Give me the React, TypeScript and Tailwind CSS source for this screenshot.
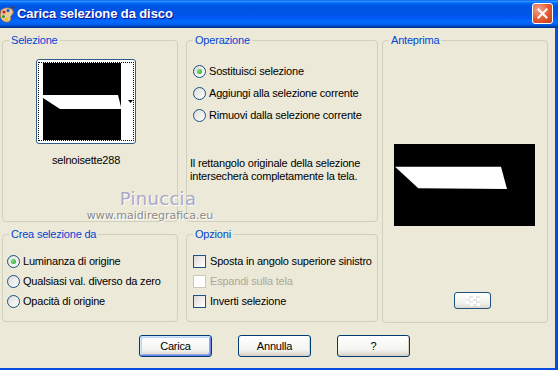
import React from "react";

function Radio({ checked }: { checked?: boolean }) {
  return (
    <span className="w-[13px] h-[13px] rounded-full border border-[#1C5180] bg-[linear-gradient(135deg,#DCDCD7,#FFFFFF)] flex items-center justify-center shrink-0">
      {checked && (
        <span className="w-[5px] h-[5px] rounded-full bg-[radial-gradient(circle_at_35%_35%,#7BE07B,#21A121)]" />
      )}
    </span>
  );
}

function Check({ disabled }: { disabled?: boolean }) {
  return disabled ? (
    <span className="w-[13px] h-[13px] border border-[#CAC8BB] bg-white shrink-0" />
  ) : (
    <span className="w-[13px] h-[13px] border border-[#1C5180] bg-[linear-gradient(135deg,#DCDCD7,#FFFFFF)] shrink-0" />
  );
}

function Group({
  label,
  className,
  children,
}: {
  label: string;
  className: string;
  children?: React.ReactNode;
}) {
  return (
    <div className={"relative border border-[#D0D0BF] rounded-[4px] " + className}>
      <span className="absolute -top-[7px] left-[6px] px-[2px] bg-[#ECE9D8] text-[#0046D5] leading-[13px] whitespace-nowrap">
        {label}
      </span>
      {children}
    </div>
  );
}

function XPButton({ label, def }: { label: string; def?: boolean }) {
  return (
    <div
      className={
        "w-[73px] h-[22px] rounded-[3px] border border-[#003C74] bg-[linear-gradient(to_bottom,#FFFFFF,#F4F4F0_70%,#D6D0C5)] flex items-center justify-center text-black " +
        (def
          ? "shadow-[inset_1px_1px_0_#CEE7FF,inset_-1px_-1px_0_#6982EE,inset_2px_2px_0_#BCD4F6,inset_-2px_-2px_0_#89ADE4]"
          : "shadow-[inset_-1px_-1px_0_#D6D0C5]")
      }
    >
      {label}
    </div>
  );
}

export default function App() {
  return (
    <div className="w-[558px] h-[370px] flex flex-col overflow-hidden font-['Liberation_Sans',Arial,sans-serif] text-[11px] tracking-[-0.2px] text-black">
      {/* Title bar */}
      <div className="h-[28px] shrink-0 flex items-center relative bg-[linear-gradient(to_bottom,#0058EE_0%,#3593FF_4%,#288EFF_6%,#127DFF_8%,#036FFC_10%,#0262EE_14%,#0057E5_20%,#0054E3_24%,#0055EB_56%,#005BF5_66%,#026AFE_76%,#0062EF_86%,#0052D6_92%,#0040AB_94%,#003092_100%)]">
        <svg width="15" height="18" viewBox="0 0 15 18" className="mt-[1px] shrink-0">
          <path d="M1 4 Q6 0 12 3 Q15 6 12 9 Q10 10 11 13 Q10 17 5 16 Q0 14 0 9 Z" fill="#E9C79A" stroke="#8A5A2A" strokeWidth="0.8" />
          <circle cx="4" cy="6" r="1.6" fill="#D42020" />
          <circle cx="8" cy="4.5" r="1.5" fill="#1C55D0" />
          <circle cx="3.5" cy="10.5" r="1.5" fill="#2E9E2E" />
          <circle cx="6.5" cy="13.5" r="1.4" fill="#F0C010" />
          <path d="M12 2 L14.5 0.5" stroke="#5A3A1A" strokeWidth="1.4" />
        </svg>
        <span className="ml-[2px] text-white font-bold text-[13px] tracking-[-0.1px] [text-shadow:1px_1px_0_#0F1089]">
          Carica selezione da disco
        </span>
        <div className="absolute right-[5px] top-[3px] w-[21px] h-[21px] rounded-[3px] border border-white bg-[radial-gradient(circle_at_30%_30%,#F3A58C,#E3582F_55%,#C23A14)] flex items-center justify-center">
          <svg width="11" height="11" viewBox="0 0 11 11">
            <path d="M1.5 1.5 L9.5 9.5 M9.5 1.5 L1.5 9.5" stroke="white" strokeWidth="2" strokeLinecap="square" />
          </svg>
        </div>
      </div>

      {/* Body */}
      <div className="flex-1 relative bg-[#ECE9D8] border-r-[3px] border-b-[2px] border-[#0A4CE0] pt-[12px] pl-[2px] flex flex-col whitespace-nowrap">
        <div className="flex">
          {/* Left column */}
          <div className="w-[176px] flex flex-col gap-[12px]">
            <Group label="Selezione" className="h-[182px] pl-[33px] pt-[18px]">
              <div className="w-[100px]">
                <div className="relative w-[100px] h-[85px] rounded-[3px] border border-[#2F5C8A] bg-white px-[1px] py-[2px]">
                  <div className="w-[96px] h-[79px] border border-dotted border-black flex">
                    <svg width="78" height="77" viewBox="0 0 78 77" className="ml-[4px] shrink-0">
                      <rect width="78" height="77" fill="black" />
                      <polygon points="0,32 75,32 78,44 78,46 17,46 0,35" fill="white" />
                    </svg>
                  </div>
                  <svg width="5" height="3" viewBox="0 0 5 3" className="absolute left-[91px] top-[40px]">
                    <polygon points="0,0 5,0 2.5,3" fill="black" />
                  </svg>
                </div>
                <div className="mt-[10px] text-center leading-[13px]">selnoisette288</div>
              </div>
            </Group>
            <Group label="Crea selezione da" className="h-[88px] pl-[4px] pt-[16px]">
              {[
                ["Luminanza di origine", true],
                ["Qualsiasi val. diverso da zero", false],
                ["Opacità di origine", false],
              ].map(([t, c]) => (
                <div key={t as string} className="h-[20px] flex items-center gap-[3px]">
                  <Radio checked={c as boolean} />
                  <span>{t as string}</span>
                </div>
              ))}
            </Group>
          </div>

          {/* Middle column */}
          <div className="ml-[8px] w-[192px] flex flex-col gap-[12px]">
            <Group label="Operazione" className="h-[182px] pl-[6px] pt-[19px]">
              {[
                ["Sostituisci selezione", true],
                ["Aggiungi alla selezione corrente", false],
                ["Rimuovi dalla selezione corrente", false],
              ].map(([t, c]) => (
                <div key={t as string} className="h-[22px] flex items-center gap-[3px]">
                  <Radio checked={c as boolean} />
                  <span>{t as string}</span>
                </div>
              ))}
              <p className="mt-[31px] -ml-[3px] leading-[13px]">
                Il rettangolo originale della selezione
                <br />
                intersecherà completamente la tela.
              </p>
            </Group>
            <Group label="Opzioni" className="h-[88px] pl-[6px] pt-[16px]">
              <div className="h-[20px] flex items-center gap-[4px]">
                <Check />
                <span>Sposta in angolo superiore sinistro</span>
              </div>
              <div className="h-[20px] flex items-center gap-[4px]">
                <Check disabled />
                <span className="text-[#ACA899]">Espandi sulla tela</span>
              </div>
              <div className="h-[20px] flex items-center gap-[4px]">
                <Check />
                <span>Inverti selezione</span>
              </div>
            </Group>
          </div>

          {/* Right column */}
          <div className="ml-[4px] w-[166px]">
            <Group label="Anteprima" className="h-[283px] pl-[11px] pt-[103px]">
              <svg width="141" height="82" viewBox="0 0 141 82" className="block">
                <rect width="141" height="82" fill="black" />
                <polygon points="1,22.7 107,22.7 113,45 24.3,44.3" fill="white" />
              </svg>
              <div className="mt-[66px] ml-[60px] w-[37px] h-[17px] rounded-[3px] border border-[#1C5180] bg-[linear-gradient(to_bottom,#FFFFFF,#F0F0EA_70%,#DCD8CC)] flex items-center justify-center">
                <div className="w-[14px] h-[10px] bg-[conic-gradient(#E8E8E8_25%,#FFFFFF_0_50%,#E8E8E8_0_75%,#FFFFFF_0)] bg-[length:7px_5px]" />
              </div>
            </Group>
          </div>
        </div>

        {/* Buttons */}
        <div className="mt-[12px] pl-[137px] flex gap-[26px]">
          <XPButton label="Carica" def />
          <XPButton label="Annulla" />
          <XPButton label="?" />
        </div>

        {/* Watermark overlay */}
        <div className="absolute left-[88px] top-[160px] w-[124px] flex flex-col items-center pointer-events-none tracking-normal">
          <span className="ml-[16px] text-[18px] leading-[21px] text-[#A9A8CA] tracking-[0.3px] font-['DejaVu_Sans',sans-serif] [text-shadow:1px_1px_0_#FFFFFF]">
            Pinuccia
          </span>
          <span className="text-[11px] leading-[13px] text-[#8A8A8A] font-['DejaVu_Sans',sans-serif] [text-shadow:1px_1px_0_#FFFFFF]">
            www.maidiregrafica.eu
          </span>
        </div>
      </div>
    </div>
  );
}
